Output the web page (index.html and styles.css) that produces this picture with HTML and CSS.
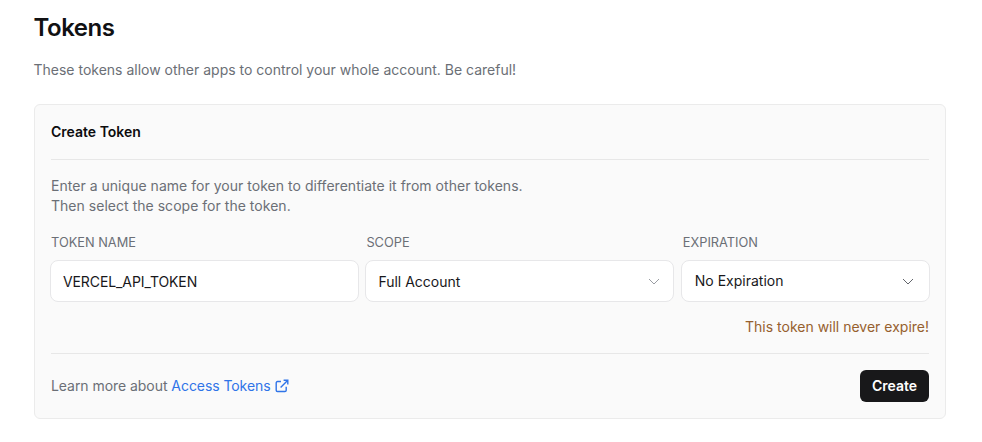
FILE: index.html
```html
<!DOCTYPE html>
<html lang="en">
<head>
<meta charset="utf-8">
<title>Tokens</title>
<link rel="stylesheet" href="styles.css">
</head>
<body>
<main class="page">
  <h1 class="title">Tokens</h1>
  <p class="lead">These tokens allow other apps to control your whole account. Be careful!</p>
  <section class="card">
    <h2 class="card-title">Create Token</h2>
    <div class="card-body">
      <p class="intro">Enter a unique name for your token to differentiate it from other tokens.<br>Then select the scope for the token.</p>
      <div class="fields">
        <div class="field">
          <label class="label" for="name">TOKEN NAME</label>
          <input class="control input" id="name" value="VERCEL_API_TOKEN">
        </div>
        <div class="field">
          <span class="label">SCOPE</span>
          <div class="control select select-scope">
            <span>Full Account</span>
            <svg class="chevron" width="12" height="7" viewBox="0 0 12 7"><path d="M1 1 6 6l5-5"/></svg>
          </div>
        </div>
        <div class="field">
          <span class="label label-expiry">EXPIRATION</span>
          <div class="control select select-expiry">
            <span>No Expiration</span>
            <svg class="chevron" width="12" height="7" viewBox="0 0 12 7"><path d="M1 1 6 6l5-5"/></svg>
          </div>
        </div>
      </div>
      <p class="warning">This token will never expire!</p>
    </div>
    <div class="card-foot">
      <p class="learn">Learn more about <a class="link" href="#">Access Tokens<svg class="ext" width="14" height="14" viewBox="0 0 14 14"><path d="M6 2.5H2.5a1.3 1.3 0 0 0-1.3 1.3v7.4a1.3 1.3 0 0 0 1.3 1.3h7.4a1.3 1.3 0 0 0 1.3-1.3V7.8M5.6 8.4 12.8 1.2M8.6 1.2h4.2v4.2"/></svg></a></p>
      <button class="button" type="button">Create</button>
    </div>
  </section>
</main>
</body>
</html>
```
FILE: styles.css
```css
* { box-sizing: border-box; }
html, body { margin: 0; background: #fff; }
body {
  font-family: Inter, "Liberation Sans", sans-serif;
  font-size: 14px;
  line-height: 20px;
  color: #18181b;
}
.page { width: 912px; margin-left: 34px; padding-top: 12px; }
.title {
  margin: 0 0 0 -0.5px;
  font-size: 24px;
  line-height: 32px;
  font-weight: 600;
  letter-spacing: -0.45px;
  color: #111113;
}
.lead { margin: 16px 0 0 -0.5px; color: #6b6f76; }
.card {
  margin-top: 24px;
  height: 315px;
  background: #fafafa;
  border: 1px solid #ebebeb;
  border-radius: 6px;
  padding: 0 16px;
}
.card-title {
  margin: 0;
  height: 55px;
  padding-top: 17px;
  font-size: 14px;
  line-height: 20px;
  font-weight: 600;
  color: #0c0c0e;
  border-bottom: 1px solid #e7e7e7;
}
.card-body { padding-top: 16px; height: 194px; border-bottom: 1px solid #e7e7e7; }
.intro { margin: 0; letter-spacing: 0.027px; color: #6b6f76; }
.fields {
  display: grid;
  grid-template-columns: 309px 309px 249px;
  column-gap: 6.4px;
  margin: 18px 0 0 -1px;
}
.field { display: flex; flex-direction: column; }
.label {
  font-size: 12.8px;
  line-height: 18px;
  margin-left: 1px;
  margin-bottom: 8px;
  color: #6b6f76;
}
.label-expiry { margin-left: 2px; }
.control {
  height: 42px;
  background: #fff;
  border: 1px solid #e7e7e9;
  border-radius: 8px;
  font: inherit;
  color: #18181b;
}
.input { width: 100%; padding: 0 12px; letter-spacing: -0.1px; outline: none; }
.select {
  display: flex;
  align-items: center;
  justify-content: space-between;
  padding: 0 12px;
}
.select-scope { padding-top: 2px; }
.select-scope .chevron { margin-bottom: 2px; stroke: #9a9da3; }
.select-expiry { padding-left: 13px; }
.select-expiry .chevron { margin-right: 3px; }
.chevron { margin-right: 1px; fill: none; stroke: #62656b; stroke-width: 1; }
.warning { margin: 15px 0 0; text-align: right; color: #96602e; }
.card-foot {
  display: flex;
  align-items: center;
  justify-content: space-between;
  padding-top: 16px;
}
.learn { margin: 0; letter-spacing: -0.05px; color: #6b6f76; }
.link { letter-spacing: -0.07px; color: #2f74e8; text-decoration: none; }
.ext { margin-left: 4px; vertical-align: -2px; fill: none; stroke: #2f74e8; stroke-width: 1.4; }
.button {
  width: 69px;
  height: 32px;
  padding: 0;
  background: #18181a;
  color: #fff;
  border: 0;
  border-radius: 6px;
  font: inherit;
  font-weight: 600;
}
```
